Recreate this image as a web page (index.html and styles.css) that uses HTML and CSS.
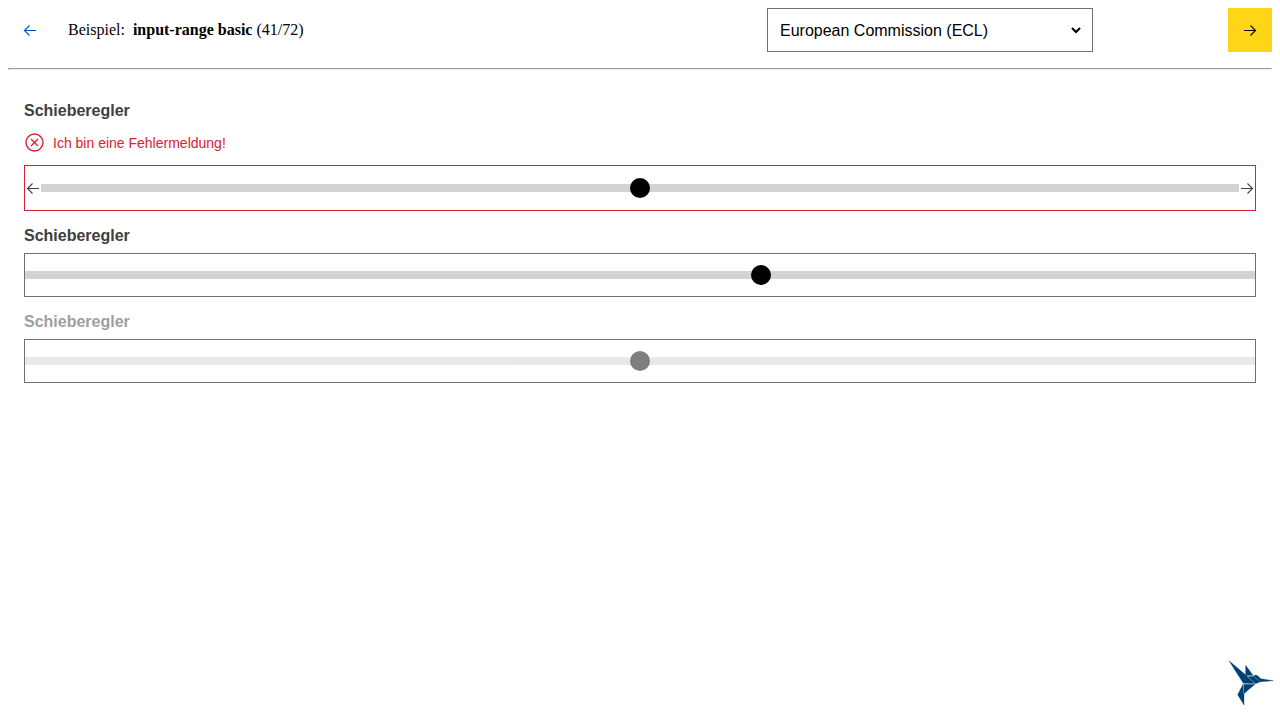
FILE: index.html
```html
<!DOCTYPE html>
<html lang="de">
<head>
<meta charset="utf-8">
<title>input-range basic</title>
<link rel="stylesheet" href="styles.css">
</head>
<body>
<header class="toolbar">
  <button class="nav-button" aria-label="zurück"><svg class="arrow" viewBox="0 0 16 16"><path d="M14 8.5H2.5M7.5 3.5l-5 5 5 5"/></svg></button>
  <div class="example">Beispiel:&nbsp; <b>input-range basic</b> (41/72)</div>
  <div class="theme-box"><select class="theme-select" aria-label="Theme"><option>European Commission (ECL)</option></select></div>
  <button class="nav-button nav-next" aria-label="weiter"><svg class="arrow" viewBox="0 0 16 16"><path d="M2 8.5h11.5M8.5 3.5l5 5-5 5"/></svg></button>
</header>
<hr class="divider">
<main class="fields">
  <div class="field">
    <label class="label" for="r1">Schieberegler</label>
    <div class="error">
      <svg class="error-icon" viewBox="0 0 20 20"><circle cx="10.5" cy="9.5" r="8.5"/><path d="M7 6l7 7M14 6l-7 7"/></svg>
      <span>Ich bin eine Fehlermeldung!</span>
    </div>
    <div class="box box-error">
      <svg class="arrow" viewBox="0 0 16 16"><path d="M14 8.5H2.5M7.5 3.5l-5 5 5 5"/></svg>
      <input class="range" id="r1" type="range" value="50">
      <svg class="arrow" viewBox="0 0 16 16"><path d="M2 8.5h11.5M8.5 3.5l5 5-5 5"/></svg>
    </div>
  </div>
  <div class="field">
    <label class="label" for="r2">Schieberegler</label>
    <div class="box"><input class="range" id="r2" type="range" value="60"></div>
  </div>
  <div class="field">
    <label class="label label-disabled" for="r3">Schieberegler</label>
    <div class="box"><input class="range range-disabled" id="r3" type="range" value="50" disabled></div>
  </div>
</main>
<svg class="logo" viewBox="0 0 180 180">
  <path d="M27 26L80 71 105 95 70 94z"/>
  <path d="M77 40L99 70 80 71 77 68z"/>
  <path d="M82 74L99 73 106 69 113 71 122 80 160 86 122 89 106 95z"/>
  <path d="M71 97H105L89 110 72 125z"/>
  <path d="M69 97L72 126V159L53 128z"/>
  <path class="seam" d="M80 72L101 71M81 73L106 95M100 72L119 88M70 95.500H105M70 96L71 125"/>
</svg>
</body>
</html>
```
FILE: styles.css
```css
body {
  margin: 8px;
  background: #fff;
  color: #000;
  font: 16px "Liberation Serif", serif;
}

.toolbar {
  display: grid;
  grid-template-columns: 44px 683px 326px 1fr;
  column-gap: 16px;
  align-items: center;
  height: 44px;
}

.example { white-space: pre-wrap; }

.nav-button {
  display: flex;
  align-items: center;
  justify-content: center;
  width: 44px;
  height: 44px;
  padding: 0;
  border: 0;
  background: transparent;
  color: #004fa8;
}

.nav-next {
  justify-self: end;
  background: #ffd617;
  color: #000;
}

.arrow {
  flex: none;
  width: 16px;
  height: 16px;
  fill: none;
  stroke: currentColor;
  stroke-width: 1.1;
}

.theme-box {
  box-sizing: border-box;
  height: 44px;
  padding: 0 8px;
  border: 1px solid #707070;
}

.theme-select {
  width: 100%;
  height: 42px;
  padding: 0;
  border: 0;
  background: #fff;
  color: #000;
  font: 16px "Liberation Sans", Arial, sans-serif;
}

.divider {
  margin: 16px 0 0;
}

.fields {
  display: flex;
  flex-direction: column;
  gap: 16px;
  padding: 32px 16px 0;
  color: #404040;
  font-family: "Liberation Sans", Arial, sans-serif;
}

.label {
  display: block;
  height: 18px;
  margin-bottom: 8px;
  font-weight: 700;
  line-height: 18px;
}

.label-disabled { color: #9f9f9f; }

.error {
  display: flex;
  align-items: center;
  gap: 9px;
  height: 20px;
  margin: 13px 0 12px;
  color: #da2131;
  font-size: 14px;
}

.error-icon {
  width: 20px;
  height: 20px;
  fill: none;
  stroke: currentColor;
  stroke-width: 1.4;
}

.box {
  display: flex;
  align-items: center;
  box-sizing: border-box;
  height: 44px;
  border: 1px solid #707070;
}

.box-error {
  height: 46px;
  border-color: #da2131;
}

.range {
  flex: 1;
  min-width: 0;
  height: 8px;
  margin: 0;
  appearance: none;
  background: #d3d3d3;
}

.range::-webkit-slider-thumb {
  appearance: none;
  width: 20px;
  height: 20px;
  border-radius: 50%;
  background: #000;
}

.range-disabled { opacity: .5; }

.logo {
  position: fixed;
  right: 0;
  bottom: 8px;
  width: 60px;
  height: 60px;
  fill: #003f72;
  stroke: #003f72;
  stroke-width: 1;
}

.seam {
  fill: none;
  stroke: #9fb8cb;
  stroke-width: 1.500;
}
```
